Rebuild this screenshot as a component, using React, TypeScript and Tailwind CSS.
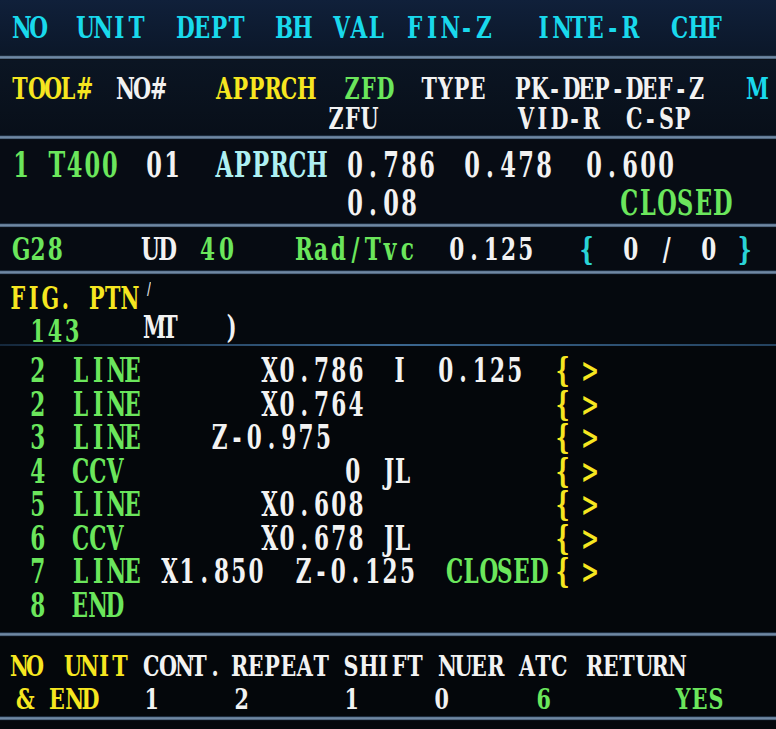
import type { ReactNode } from "react";
import clsx from "clsx";

const CY = "text-[#19d9ec]";
const YE = "text-[#f6e620]";
const GR = "text-[#6be65c]";
const WH = "text-[#f2f2f2]";
const LC = "text-[#aef0f2]";

function Line({ className, children }: { className?: string; children: ReactNode }) {
  return (
    <div className={clsx("flex items-center whitespace-pre leading-none origin-center", className)}>
      {children}
    </div>
  );
}

// monospaced word: every glyph sits centred in a fixed cell
function W({ s, c, w, p = "w-[17.3px]" }: { s: string; c: string; w?: string; p?: string }) {
  return (
    <span className={clsx("flex shrink-0", c, w)}>
      {[...s].map((ch, i) => (
        <span key={i} className={clsx(p, "shrink-0 text-center")}>
          {ch}
        </span>
      ))}
    </span>
  );
}

function Sep() {
  return (
    <div className="h-[5px] flex flex-col">
      <div className="h-[1px] bg-[#1b2a3b]" />
      <div className="h-[3px] bg-gradient-to-b from-[#5d7590] via-[#6f88a3] to-[#42566d]" />
      <div className="h-[1px] bg-[#0a1018]" />
    </div>
  );
}

// the yellow "{ >" marker at the end of a shape row
function Brk() {
  return (
    <>
      <W s="{" c={YE} w="w-[27px]" />
      <W s=">" c={YE} />
    </>
  );
}

export default function App() {
  return (
    <div className="w-[776px] h-[729px] overflow-hidden bg-[#05080d] font-[family-name:DejaVu_Serif_Condensed,DejaVu_Serif,serif] font-bold">
      {/* unit header */}
      <div className="h-[55px] bg-gradient-to-b from-[#10203a] to-[#0b1729] flex items-center">
        <Line className="pl-[12px] text-[24px] scale-y-[1.22]">
          <W s="NO" c={CY} w="w-[64px]" />
          <W s="UNIT" c={CY} w="w-[100px]" />
          <W s="DEPT" c={CY} w="w-[99px]" />
          <W s="BH" c={CY} w="w-[58px]" />
          <W s="VAL" c={CY} w="w-[73px]" />
          <W s="FIN-Z" c={CY} w="w-[129px]" />
          <W s="INTE-R" c={CY} w="w-[136px]" />
          <W s="CHF" c={CY} />
        </Line>
      </div>
      <Sep />

      {/* tool header */}
      <div className="h-[75px] pt-[12px] bg-gradient-to-b from-[#0b1523] to-[#080f19] text-[23px]">
        <Line className="h-[30px] pl-[12px] scale-y-[1.3]">
          <W s="TOOL#" c={YE} w="w-[104px]" p="w-[16px]" />
          <W s="NO#" c={WH} w="w-[100px]" p="w-[17px]" />
          <W s="APPRCH" c={YE} w="w-[128px]" p="w-[16.2px]" />
          <W s="ZFD" c={GR} w="w-[77px]" p="w-[16.2px]" />
          <W s="TYPE" c={WH} w="w-[94px]" p="w-[16.2px]" />
          <W s="PK-DEP-DEF-Z" c={WH} w="w-[231px]" p="w-[15.8px]" />
          <W s="M" c={CY} />
        </Line>
        <Line className="h-[30px] pl-[328px] scale-y-[1.3]">
          <W s="ZFU" c={WH} w="w-[190px]" p="w-[16.2px]" />
          <W s="VID-R" c={WH} w="w-[108px]" p="w-[16.2px]" />
          <W s="C-SP" c={WH} p="w-[16.2px]" />
        </Line>
      </div>
      <Sep />

      {/* tool data */}
      <div className="h-[83px] pt-[7px] text-[25px] bg-[#070c14]">
        <Line className="h-[36px] pl-[12px] scale-y-[1.38]">
          <W s="1" c={GR} w="w-[36px]" p="w-[18px]" />
          <W s="T400" c={GR} w="w-[97px]" p="w-[17.7px]" />
          <W s="01" c={WH} w="w-[70px]" p="w-[18px]" />
          <W s="APPRCH" c={LC} w="w-[131px]" p="w-[18.3px]" />
          <W s="0.786" c={WH} w="w-[117px]" p="w-[18px]" />
          <W s="0.478" c={WH} w="w-[122px]" p="w-[18px]" />
          <W s="0.600" c={WH} p="w-[18px]" />
        </Line>
        <Line className="h-[40px] pl-[346px] scale-y-[1.38]">
          <W s="0.08" c={WH} w="w-[274px]" p="w-[18px]" />
          <W s="CLOSED" c={GR} p="w-[18.6px]" />
        </Line>
      </div>
      <Sep />

      {/* return row */}
      <div className="h-[42px] flex items-center text-[24px] bg-[#060b12]">
        <Line className="pl-[12px] scale-y-[1.35]">
          <W s="G28" c={GR} w="w-[129px]" />
          <W s="UD" c={WH} w="w-[57px]" />
          <W s="40" c={GR} w="w-[97px]" p="w-[19px]" />
          <W s="Rad/Tvc" c={GR} w="w-[153px]" />
          <W s="0.125" c={WH} w="w-[130px]" />
          <W s="{" c="text-[#2ad3d6]" w="w-[44px]" />
          <W s="0" c={WH} w="w-[36px]" />
          <W s="/" c={WH} w="w-[42px]" />
          <W s="0" c={WH} w="w-[36px]" />
          <W s="}" c="text-[#2ad3d6]" />
        </Line>
      </div>
      <Sep />

      {/* figure pattern */}
      <div className="h-[69px] pt-[7px] text-[23px] bg-[#05090e]">
        <Line className="h-[30px] pl-[10px] scale-y-[1.35]">
          <W s="FIG. PTN" c={YE} w="w-[137px]" p="w-[15.8px]" />
          <span className="text-[12px] text-[#d8d8d8] self-start translate-y-[3px]">/</span>
        </Line>
        <Line className="h-[28px] pl-[29px] scale-y-[1.35]">
          <W s="143" c={GR} w="w-[114px] translate-y-[3px]" />
          <W s="MT" c={WH} w="w-[80px]" p="w-[18px]" />
          <W s=")" c={WH} />
        </Line>
      </div>
      <div className="h-[2px] bg-gradient-to-r from-[#15283c] via-[#3b6790] to-[#24425f]" />

      {/* shape list */}
      <div className="h-[286px] pt-[8px] text-[24px] bg-[#04070b]">
        <Line className="h-[33.5px] pl-[29px] scale-y-[1.37]">
          <W s="2" c={GR} w="w-[43px]" />
          <W s="LINE" c={GR} w="w-[189px]" />
          <W s="X0.786" c={WH} w="w-[130px]" />
          <W s="I" c={WH} w="w-[46px]" />
          <W s="0.125" c={WH} w="w-[117px]" />
          <Brk />
        </Line>
        <Line className="h-[33.5px] pl-[29px] scale-y-[1.37]">
          <W s="2" c={GR} w="w-[43px]" />
          <W s="LINE" c={GR} w="w-[189px]" />
          <W s="X0.764" c={WH} w="w-[293px]" />
          <Brk />
        </Line>
        <Line className="h-[33.5px] pl-[29px] scale-y-[1.37]">
          <W s="3" c={GR} w="w-[43px]" />
          <W s="LINE" c={GR} w="w-[139px]" />
          <W s="Z-0.975" c={WH} w="w-[343px]" />
          <Brk />
        </Line>
        <Line className="h-[33.5px] pl-[29px] scale-y-[1.37]">
          <W s="4" c={GR} w="w-[43px]" />
          <W s="CCV" c={GR} w="w-[272px]" />
          <W s="0" c={WH} w="w-[39px]" />
          <W s="JL" c={WH} w="w-[171px]" p="w-[12px]" />
          <Brk />
        </Line>
        <Line className="h-[33.5px] pl-[29px] scale-y-[1.37]">
          <W s="5" c={GR} w="w-[43px]" />
          <W s="LINE" c={GR} w="w-[189px]" />
          <W s="X0.608" c={WH} w="w-[293px]" />
          <Brk />
        </Line>
        <Line className="h-[33.5px] pl-[29px] scale-y-[1.37]">
          <W s="6" c={GR} w="w-[43px]" />
          <W s="CCV" c={GR} w="w-[189px]" />
          <W s="X0.678" c={WH} w="w-[122px]" />
          <W s="JL" c={WH} w="w-[171px]" p="w-[12px]" />
          <Brk />
        </Line>
        <Line className="h-[33.5px] pl-[29px] scale-y-[1.37]">
          <W s="7" c={GR} w="w-[43px]" />
          <W s="LINE" c={GR} w="w-[89px]" />
          <W s="X1.850" c={WH} w="w-[134px]" />
          <W s="Z-0.125" c={WH} w="w-[151px]" />
          <W s="CLOSED" c={GR} w="w-[108px]" p="w-[16.8px]" />
          <Brk />
        </Line>
        <Line className="h-[33.5px] pl-[29px] scale-y-[1.37]">
          <W s="8" c={GR} w="w-[42px]" />
          <W s="END" c={GR} />
        </Line>
      </div>
      <Sep />

      {/* unit footer */}
      <div className="h-[79px] pt-[12px] text-[23px] bg-[#04070b]">
        <Line className="h-[32px] pl-[10px] scale-y-[1.22]">
          <W s="NO" c={YE} w="w-[54px]" p="w-[16px]" />
          <W s="UNIT" c={YE} w="w-[79px]" p="w-[16px]" />
          <W s="CONT." c={WH} w="w-[88px]" p="w-[16px]" />
          <W s="REPEAT" c={WH} w="w-[112px]" p="w-[16.4px]" />
          <W s="SHIFT" c={WH} w="w-[95px]" p="w-[16px]" />
          <W s="NUER" c={WH} w="w-[81px]" p="w-[16.4px]" />
          <W s="ATC" c={WH} w="w-[67px]" p="w-[16px]" />
          <W s="RETURN" c={WH} p="w-[16.4px]" />
        </Line>
        <Line className="h-[34px] pl-[16px] scale-y-[1.22]">
          <W s="& END" c={YE} w="w-[127px]" p="w-[16.4px]" />
          <W s="1" c={WH} w="w-[90px]" />
          <W s="2" c={WH} w="w-[110px]" />
          <W s="1" c={WH} w="w-[90px]" />
          <W s="0" c={WH} w="w-[102px]" />
          <W s="6" c={GR} w="w-[140px]" />
          <W s="YES" c={GR} p="w-[16.4px]" />
        </Line>
      </div>
      <Sep />
    </div>
  );
}
